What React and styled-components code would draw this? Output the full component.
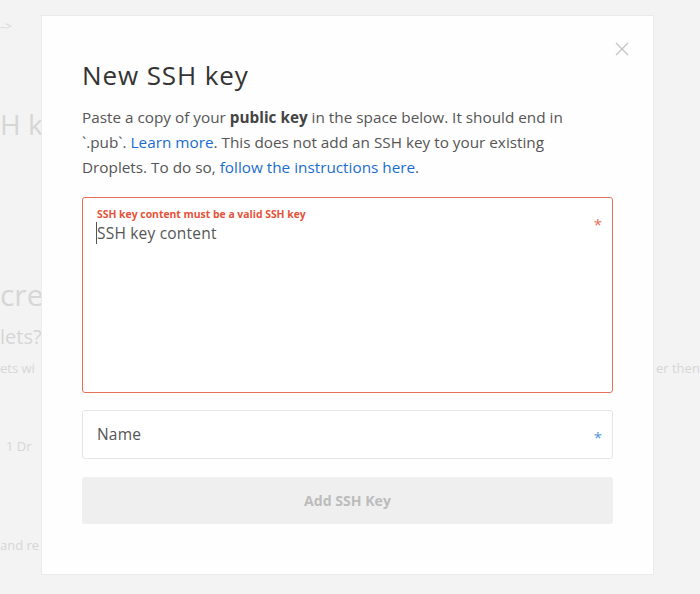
import React from "react";
import styled, { createGlobalStyle } from "styled-components";

const Global = createGlobalStyle`
  html, body { margin: 0; padding: 0; }
  body {
    background: #f3f3f3;
    font-family: "Open Sans", "Liberation Sans", sans-serif;
    width: 700px;
    height: 594px;
    overflow: hidden;
  }
`;

const Page = styled.div`
  position: relative;
  width: 700px;
  height: 594px;
  overflow: hidden;
`;

const Backdrop = styled.div`
  width: 41px;
  overflow: hidden;
  display: flex;
  flex-direction: column;
  padding-top: 18px;
  color: #d6d6d6;
`;

const Faint = styled.div`
  font-size: ${(p) => p.$size}px;
  line-height: ${(p) => p.$size + 4}px;
  margin-top: ${(p) => p.$mt || 0}px;
  padding-left: ${(p) => p.$pl || 0}px;
  white-space: nowrap;
`;

const RightFaint = styled.div`
  position: absolute;
  left: 656px;
  top: 359px;
  font-size: 13px;
  color: #d6d6d6;
  white-space: nowrap;
`;

const Overlay = styled.div`
  position: absolute;
  inset: 0;
  display: flex;
  align-items: flex-start;
  padding: 15px 0 0 41px;
`;

const Modal = styled.div`
  position: relative;
  box-sizing: border-box;
  width: 613px;
  height: 560px;
  background: #fefefe;
  border: 1px solid #ebebeb;
  padding: 44px 40px 0 40px;
  display: flex;
  flex-direction: column;
`;

const Close = styled.button`
  position: absolute;
  top: 26px;
  right: 24px;
  width: 14px;
  height: 14px;
  padding: 0;
  border: 0;
  background: none;
  display: flex;
`;

const Title = styled.h1`
  margin: 0;
  font-size: 26px;
  font-weight: 400;
  line-height: 30px;
  letter-spacing: 0.9px;
  color: #333;
`;

const Desc = styled.p`
  margin: 15px 0 0 0;
  font-size: 15.3px;
  line-height: 25px;
  color: #555;
  white-space: nowrap;
  b { font-weight: 700; color: #444; }
  a { color: #1b6ccf; text-decoration: none; }
`;

const Field = styled.div`
  position: relative;
  box-sizing: border-box;
  width: 531px;
  height: ${(p) => p.$h}px;
  border: 1px solid ${(p) => (p.$error ? "#e8705a" : "#e6e6e6")};
  border-radius: 3px;
  background: #fff;
  margin-top: ${(p) => p.$mt}px;
  padding: ${(p) => p.$pad};
  display: flex;
  flex-direction: column;
`;

const ErrorLabel = styled.div`
  font-size: 10.4px;
  font-weight: 700;
  color: #e5533a;
  line-height: 12px;
`;

const Value = styled.div`
  font-size: 15.5px;
  line-height: 20px;
  letter-spacing: 0.2px;
  color: #555;
  margin-top: ${(p) => p.$mt || 0}px;
  span { border-left: 1px solid #555; margin-left: -1px; }
`;

const Star = styled.span`
  position: absolute;
  right: 10px;
  top: ${(p) => p.$top}px;
  font-size: 15px;
  line-height: 15px;
  color: ${(p) => p.$color};
  opacity: 0.85;
`;

const Button = styled.button`
  margin-top: 18px;
  width: 531px;
  height: 47px;
  border: 0;
  border-radius: 3px;
  background: #efefef;
  color: #bcbcbc;
  font-family: inherit;
  font-size: 14.1px;
  font-weight: 700;
`;

export default function App() {
  return (
    <Page>
      <Global />
      <Backdrop>
        <Faint $size={11}>–&gt;</Faint>
        <Faint $size={28} $mt={75}>H ke</Faint>
        <Faint $size={30} $mt={138}>crea</Faint>
        <Faint $size={20} $mt={13}>lets?</Faint>
        <Faint $size={13} $mt={11}>ets wi</Faint>
        <Faint $size={13} $mt={61} $pl={6}>1 Dr</Faint>
        <Faint $size={13} $mt={82}>and re</Faint>
      </Backdrop>
      <RightFaint>er then</RightFaint>
      <Overlay>
        <Modal>
          <Close aria-label="Close">
            <svg width="14" height="14" viewBox="0 0 14 14">
              <path d="M1 1L13 13M13 1L1 13" stroke="#c4c4c4" strokeWidth="1.3" fill="none" />
            </svg>
          </Close>
          <Title>New SSH key</Title>
          <Desc>
            Paste a copy of your <b>public key</b> in the space below. It should end in
            <br />
            `.pub`. <a href="#">Learn more</a>. This does not add an SSH key to your existing
            <br />
            Droplets. To do so, <a href="#">follow the instructions here</a>.
          </Desc>
          <Field $error $h={196} $mt={17} $pad="10px 14px">
            <ErrorLabel>SSH key content must be a valid SSH key</ErrorLabel>
            <Value $mt={3}><span />SSH key content</Value>
            <Star $top={19} $color="#e5533a">*</Star>
          </Field>
          <Field $h={49} $mt={17} $pad="13px 14px">
            <Value>Name</Value>
            <Star $top={19} $color="#2f7fd6">*</Star>
          </Field>
          <Button>Add SSH Key</Button>
        </Modal>
      </Overlay>
    </Page>
  );
}
